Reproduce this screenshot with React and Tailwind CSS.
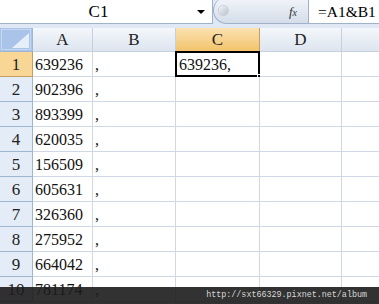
import React from "react";

const cols = [
  { key: "A", w: 60 },
  { key: "B", w: 83 },
  { key: "C", w: 84 },
  { key: "D", w: 82 },
  { key: "E", w: 90 },
];

const values = ["639236", "902396", "893399", "620035", "156509", "605631", "326360", "275952", "664042", "781174"];

const serif = { fontFamily: '"Liberation Serif", "Noto Sans CJK TC", serif' };

function FormulaBar() {
  return (
    <div className="flex h-[28px] bg-[#dfe8f4] pb-[4px]">
      <div className="relative flex w-[213px] items-center border-b border-r border-[#9fb2c7] bg-white">
        <span className="flex-1 text-center text-[17px] leading-none text-black" style={serif}>C1</span>
        <span className="mr-[7px] h-0 w-0 border-x-[4px] border-t-[4px] border-x-transparent border-t-black" />
      </div>
      <div className="relative -mt-[3px] flex w-[95px] items-center rounded-l-full border-b border-l border-[#9fb2c7] bg-gradient-to-b from-[#f3f6fb] to-[#d4dde9]">
        <span className="ml-[5px] h-[9px] w-[9px] rounded-full bg-gradient-to-br from-[#f4f6f8] to-[#b8c0ca] shadow-[0_0_0_1px_#c8d0da]" />
        <span className="ml-auto mr-[11px] mt-[3px] text-[13px] italic leading-none text-[#333]" style={serif}>
          f<span className="text-[10px]">x</span>
        </span>
      </div>
      <div className="flex flex-1 items-center border-b border-l border-[#9fb2c7] bg-white pl-[9px]">
        <span className="text-[15.5px] leading-none text-black" style={serif}>=A1&amp;B1</span>
      </div>
    </div>
  );
}

function HeaderRow() {
  return (
    <div className="flex h-[24px]">
      <div className="relative w-[33px] shrink-0 border-b border-r border-[#9eb6ce] bg-[#a9c4e8]">
        <div className="absolute inset-[1px] border border-[#c6d8ef]" />
        <svg className="absolute right-[3px] bottom-[3px]" width="17" height="15" viewBox="0 0 17 15">
          <polygon points="17,0 17,15 0,15" fill="#e6eef9" />
        </svg>
      </div>
      {cols.map((c) => (
        <div
          key={c.key}
          className={`flex shrink-0 items-center justify-center border-b border-r text-[17px] leading-none ${
            c.key === "C"
              ? "border-[#c2a060] bg-gradient-to-b from-[#fbe2b0] to-[#f2c36a]"
              : "border-[#c5d1de] bg-gradient-to-b from-[#f4f7fb] to-[#dde5ef]"
          } text-[#222]`}
          style={{ ...serif, width: c.w }}
        >
          {c.key !== "E" && c.key}
        </div>
      ))}
    </div>
  );
}

function Row({ n, value }) {
  const selected = n === 1;
  return (
    <div className="flex h-[25px]">
      <div
        className={`flex w-[33px] shrink-0 items-end justify-center border-b border-r pb-[3px] text-[17px] leading-none text-[#222] ${
          selected ? "border-[#c2a060] bg-[#f8d796]" : "border-[#9eb6ce] bg-[#e4ecf7]"
        }`}
        style={serif}
      >
        {n}
      </div>
      {cols.map((c) => (
        <div
          key={c.key}
          className="relative flex shrink-0 items-end border-b border-r border-[#d0d7e5] bg-white pb-[3px] pl-[2px] text-[16px] leading-none text-[#111]"
          style={{ ...serif, width: c.w }}
        >
          {c.key === "A" && value}
          {c.key === "B" && ","}
          {c.key === "C" && selected && (
            <>
              <span className="pl-[1px]">{value},</span>
              <div className="absolute -left-[1px] -top-[1px] bottom-[-1px] right-[-1px] border-2 border-black" />
              <div className="absolute -bottom-[4px] -right-[4px] h-[6px] w-[6px] border border-white bg-black" />
            </>
          )}
        </div>
      ))}
    </div>
  );
}

export default function App() {
  return (
    <div className="relative h-[304px] w-[379px] overflow-hidden bg-white">
      <FormulaBar />
      <HeaderRow />
      {values.map((v, i) => (
        <Row key={i} n={i + 1} value={v} />
      ))}
      <div className="absolute bottom-0 left-0 right-0 flex h-[17px] items-center justify-end bg-[#1c1c1c]/90 pr-[12px]">
        <span className="text-[8.4px] leading-none text-[#d8d8d8]" style={{ fontFamily: '"Liberation Mono", monospace' }}>
          http://sxt66329.pixnet.net/album
        </span>
      </div>
    </div>
  );
}
